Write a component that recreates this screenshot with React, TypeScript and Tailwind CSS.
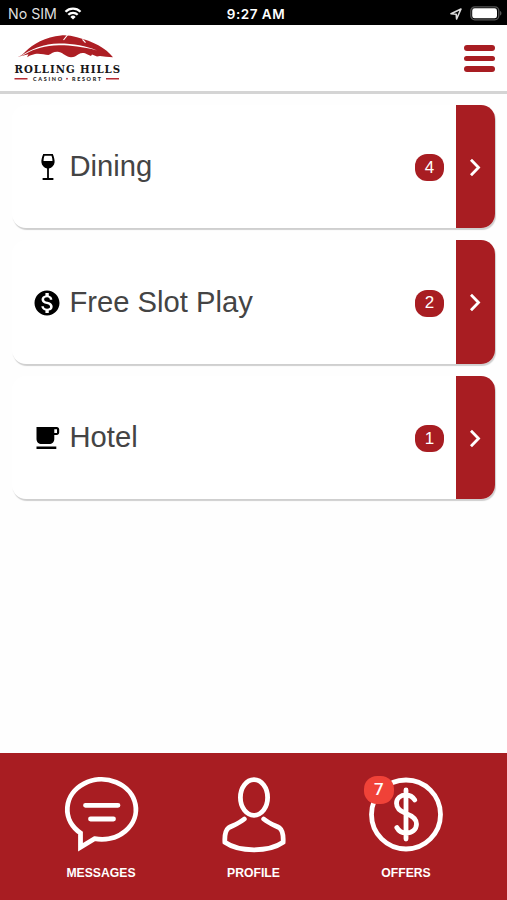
import type { ReactNode } from "react";
import { MdMonetizationOn } from "react-icons/md";

interface OfferCardProps {
  icon: ReactNode;
  title: string;
  count: number;
}

interface TabProps {
  label: string;
  badge?: number;
  children: ReactNode;
}

function StatusBar() {
  return (
    <div className="grid h-[25px] grid-cols-3 items-center bg-black pt-[3px] font-[Inter,sans-serif] text-white">
      <div className="flex items-center gap-[7px] pl-[8px] text-[#dedede]">
        <span className="text-[14.2px] leading-none">No SIM</span>
        <svg width="18" height="13" viewBox="0 0 17 13" fill="none" stroke="#fff" strokeWidth="2.3">
          <path d="M1 4.8a10.6 10.6 0 0 1 15 0" />
          <path d="M3.8 7.8a6.6 6.6 0 0 1 9.4 0" />
          <path d="M8.5 12.5 5.9 9.9a3.7 3.7 0 0 1 5.2 0Z" fill="#fff" stroke="none" />
        </svg>
      </div>
      <span className="pl-[5px] pt-px text-center text-[13.5px] font-semibold leading-none tracking-[0.5px]">9:27 AM</span>
      <div className="flex items-center justify-end gap-[8px] pr-[5px]">
        <svg width="12" height="12" viewBox="0 0 12 12" fill="none" stroke="#ddd" strokeWidth="1.6" strokeLinejoin="round">
          <path d="M1 5.8 11 1 6.6 11 6.2 6.2Z" />
        </svg>
        <svg className="-mt-[2px]" width="32" height="15" viewBox="0 0 32 15">
          <rect x=".8" y=".8" width="28" height="13" rx="4" fill="none" stroke="#555" strokeWidth="1.3" />
          <rect x="2.2" y="2.3" width="24.8" height="10" rx="2.4" fill="#fff" />
          <path d="M30.3 5v4.6c1.4-.6 1.4-4 0-4.6Z" fill="#777" />
        </svg>
      </div>
    </div>
  );
}

function Logo() {
  return (
    <svg width="110" height="50" viewBox="12 33 110 50" role="img" aria-label="Rolling Hills Casino Resort">
      <path
        d="M17.500 57c4-1.400 5.500-3 8-5.500C32 44.500 46 36.500 61 35.400c5-.4 11 .3 16 1.900C93 41.500 106 48 113 57.300l-7-.6-6-.7-3 .4-5-1.800-1 1.400-4-1.700c-2.500-1.800-6-1.600-8.500-.1-3 1.800-4 3-7.500 3-5 0-7-4-12-5.200-5-.8-7 1.500-10.500 3-4-.2-8-1.700-13.500-1L30 55.500l-3 1.800 1.500-3Z"
        fill="#ad1e24"
      />
      <path d="M19 57.200C31 49 44 43.600 59 43.600c15 0 27 2.500 38 6.800-15-3.700-27-5.200-38-5.100C45 45.700 35 48.600 25.500 54Z" fill="#fff" />
      <path d="m63.500 40 4-5M82.500 39.400l3 3.300" stroke="#fff" strokeWidth="1.200" />
      <text x="14.500" y="73.200" textLength="105.500" lengthAdjust="spacing" fontFamily="DejaVu Serif, serif" fontStretch="condensed" fontWeight="700" fontSize="11.300" fill="#161616">
        ROLLING HILLS
      </text>
      <path d="M14.500 78.700h13M106 78.700h13" stroke="#b52a32" strokeWidth="1.500" />
      <g fontFamily="Lato, sans-serif" fontWeight="900" fontSize="5.400" fill="#222">
        <text x="33" y="80.600" textLength="29">CASINO</text>
        <text x="72" y="80.600" textLength="29">RESORT</text>
      </g>
      <circle cx="67" cy="78.700" r=".9" fill="#b52a32" />
    </svg>
  );
}

function Header() {
  return (
    <header className="flex h-[69px] items-start justify-between border-b-[3px] border-[#d4d4d4] bg-white pl-[12px] pr-[12px] pt-[8px]">
      <Logo />
      <button aria-label="Menu" className="mt-[12px] flex flex-col gap-[5px]">
        <span className="h-[5.500px] w-[31px] rounded-full bg-[#a81d22]" />
        <span className="h-[5.500px] w-[31px] rounded-full bg-[#a81d22]" />
        <span className="h-[5.500px] w-[31px] rounded-full bg-[#a81d22]" />
      </button>
    </header>
  );
}

function WineIcon() {
  return (
    <svg className="ml-px mt-px" width="14" height="27" viewBox="0 0 14 27">
      <path
        fillRule="evenodd"
        d="M2.200 0h9.600c1.300 3 2 6 1.800 8.300-.3 3.200-2.600 5.500-5.700 6.200v9.600h4.500v1.900H1.600v-1.900h4.500v-9.600C3 13.800.7 11.500.4 8.300.2 6 .9 3 2.200 0Zm1.300 1.800c-.6 1.700-1 3.500-1 5.200h9c0-1.700-.4-3.500-1-5.200Z"
      />
    </svg>
  );
}

function CupIcon() {
  return (
    <svg className="ml-[2px] mt-[2px] shrink-0" width="24" height="23" viewBox="0 0 24 23">
      <path
        fillRule="evenodd"
        d="M.5 0h20.300c1.300 0 2.400 1 2.400 2.400v3.200c0 1.400-1.100 2.500-2.400 2.500h-2.500v3.800c0 3-2.200 5.200-5.200 5.200H5.700c-3 0-5.200-2.200-5.200-5.200Zm17.800 2.200v3.900h2.700V2.200ZM.5 19.600h19.800V22H.5Z"
      />
    </svg>
  );
}

function OfferCard({ icon, title, count }: OfferCardProps) {
  return (
    <button className="flex h-[123.200px] w-full items-stretch overflow-hidden rounded-[14px] bg-white text-left shadow-[1px_2px_1px_#cfcfcf]">
      <span className="flex flex-1 items-center pl-[22px] pr-[12px]">
        <span className="flex w-[26px] justify-center">{icon}</span>
        <span className="flex-1 pl-[9.500px] pt-px text-[29.200px] leading-none text-[#444]">{title}</span>
        <span className="mt-[2px] flex h-[27px] w-[29px] items-center justify-center rounded-[12px] bg-[#a81d22] text-[17px] text-white">
          {count}
        </span>
      </span>
      <span className="flex w-[39px] items-center justify-center bg-[#a81d22] pr-[2px] pt-px">
        <svg width="12" height="19" viewBox="0 0 12 19" fill="none" stroke="#fff" strokeWidth="2.800">
          <path d="m2 1.800 7.500 7.700L2 17.200" />
        </svg>
      </span>
    </button>
  );
}

function Tab({ label, badge, children }: TabProps) {
  return (
    <button className="relative flex w-[152.500px] flex-col items-center pt-[22px]">
      <svg width="80" height="78" viewBox="0 0 80 78" fill="none" stroke="#fff" strokeWidth="4.800" strokeLinecap="round">
        {children}
      </svg>
      <span className="mt-[13px] text-[12.200px] font-bold leading-[14px] text-white">{label}</span>
      {badge !== undefined && (
        <span className="absolute left-[34px] top-[23px] flex h-[28px] w-[30px] items-center justify-center rounded-[13px] bg-[#f04238] font-[Roboto,sans-serif] text-[17px] font-medium text-white">
          {badge}
        </span>
      )}
    </button>
  );
}

export default function App() {
  return (
    <div className="flex h-[900px] w-[507px] flex-col overflow-hidden bg-[#fefefe] font-['Liberation_Sans',Arial,sans-serif]">
      <StatusBar />
      <Header />
      <main className="flex flex-1 flex-col gap-[12.300px] px-[12px] pt-[11px]">
        <OfferCard icon={<WineIcon />} title="Dining" count={4} />
        <OfferCard icon={<MdMonetizationOn className="mt-[2px] size-[30px] shrink-0 text-black" />} title="Free Slot Play" count={2} />
        <OfferCard icon={<CupIcon />} title="Hotel" count={1} />
      </main>
      <nav className="flex h-[147px] justify-center bg-[#a81d22]">
        <Tab label="MESSAGES">
          <path d="M19.500 58V72.300L33.500 63.700A34.300 30 0 1 0 19.500 58Z" />
          <path d="M24.500 30.300h32.500M29.500 44h23" />
        </Tab>
        <Tab label="PROFILE">
          <ellipse cx="40" cy="22.500" rx="13.600" ry="17.800" />
          <path d="M30.300 44C25 48.500 19 50.500 14.500 52.800 11 55.500 10.500 60.500 10.900 67.300 19 73 29 74.800 40 74.800s21-1.800 29.100-7.500c.4-6.800-.1-11.800-3.600-14.500-4.500-2.300-10.500-4.300-15.800-8.800" />
        </Tab>
        <Tab label="OFFERS" badge={7}>
          <circle cx="40" cy="39.500" r="34.500" />
          <path d="M40 15v49M48.800 25c-2-3.200-5.300-5-8.800-5-5.500 0-9.500 3.300-9.500 8.300 0 5.200 4 8.200 9.500 10.200 6 2.200 10.500 4.800 10.500 10.500 0 5.500-4.500 9-10.500 9-4 0-7.300-2-9.200-5.500" strokeWidth="4.800" />
        </Tab>
      </nav>
    </div>
  );
}
